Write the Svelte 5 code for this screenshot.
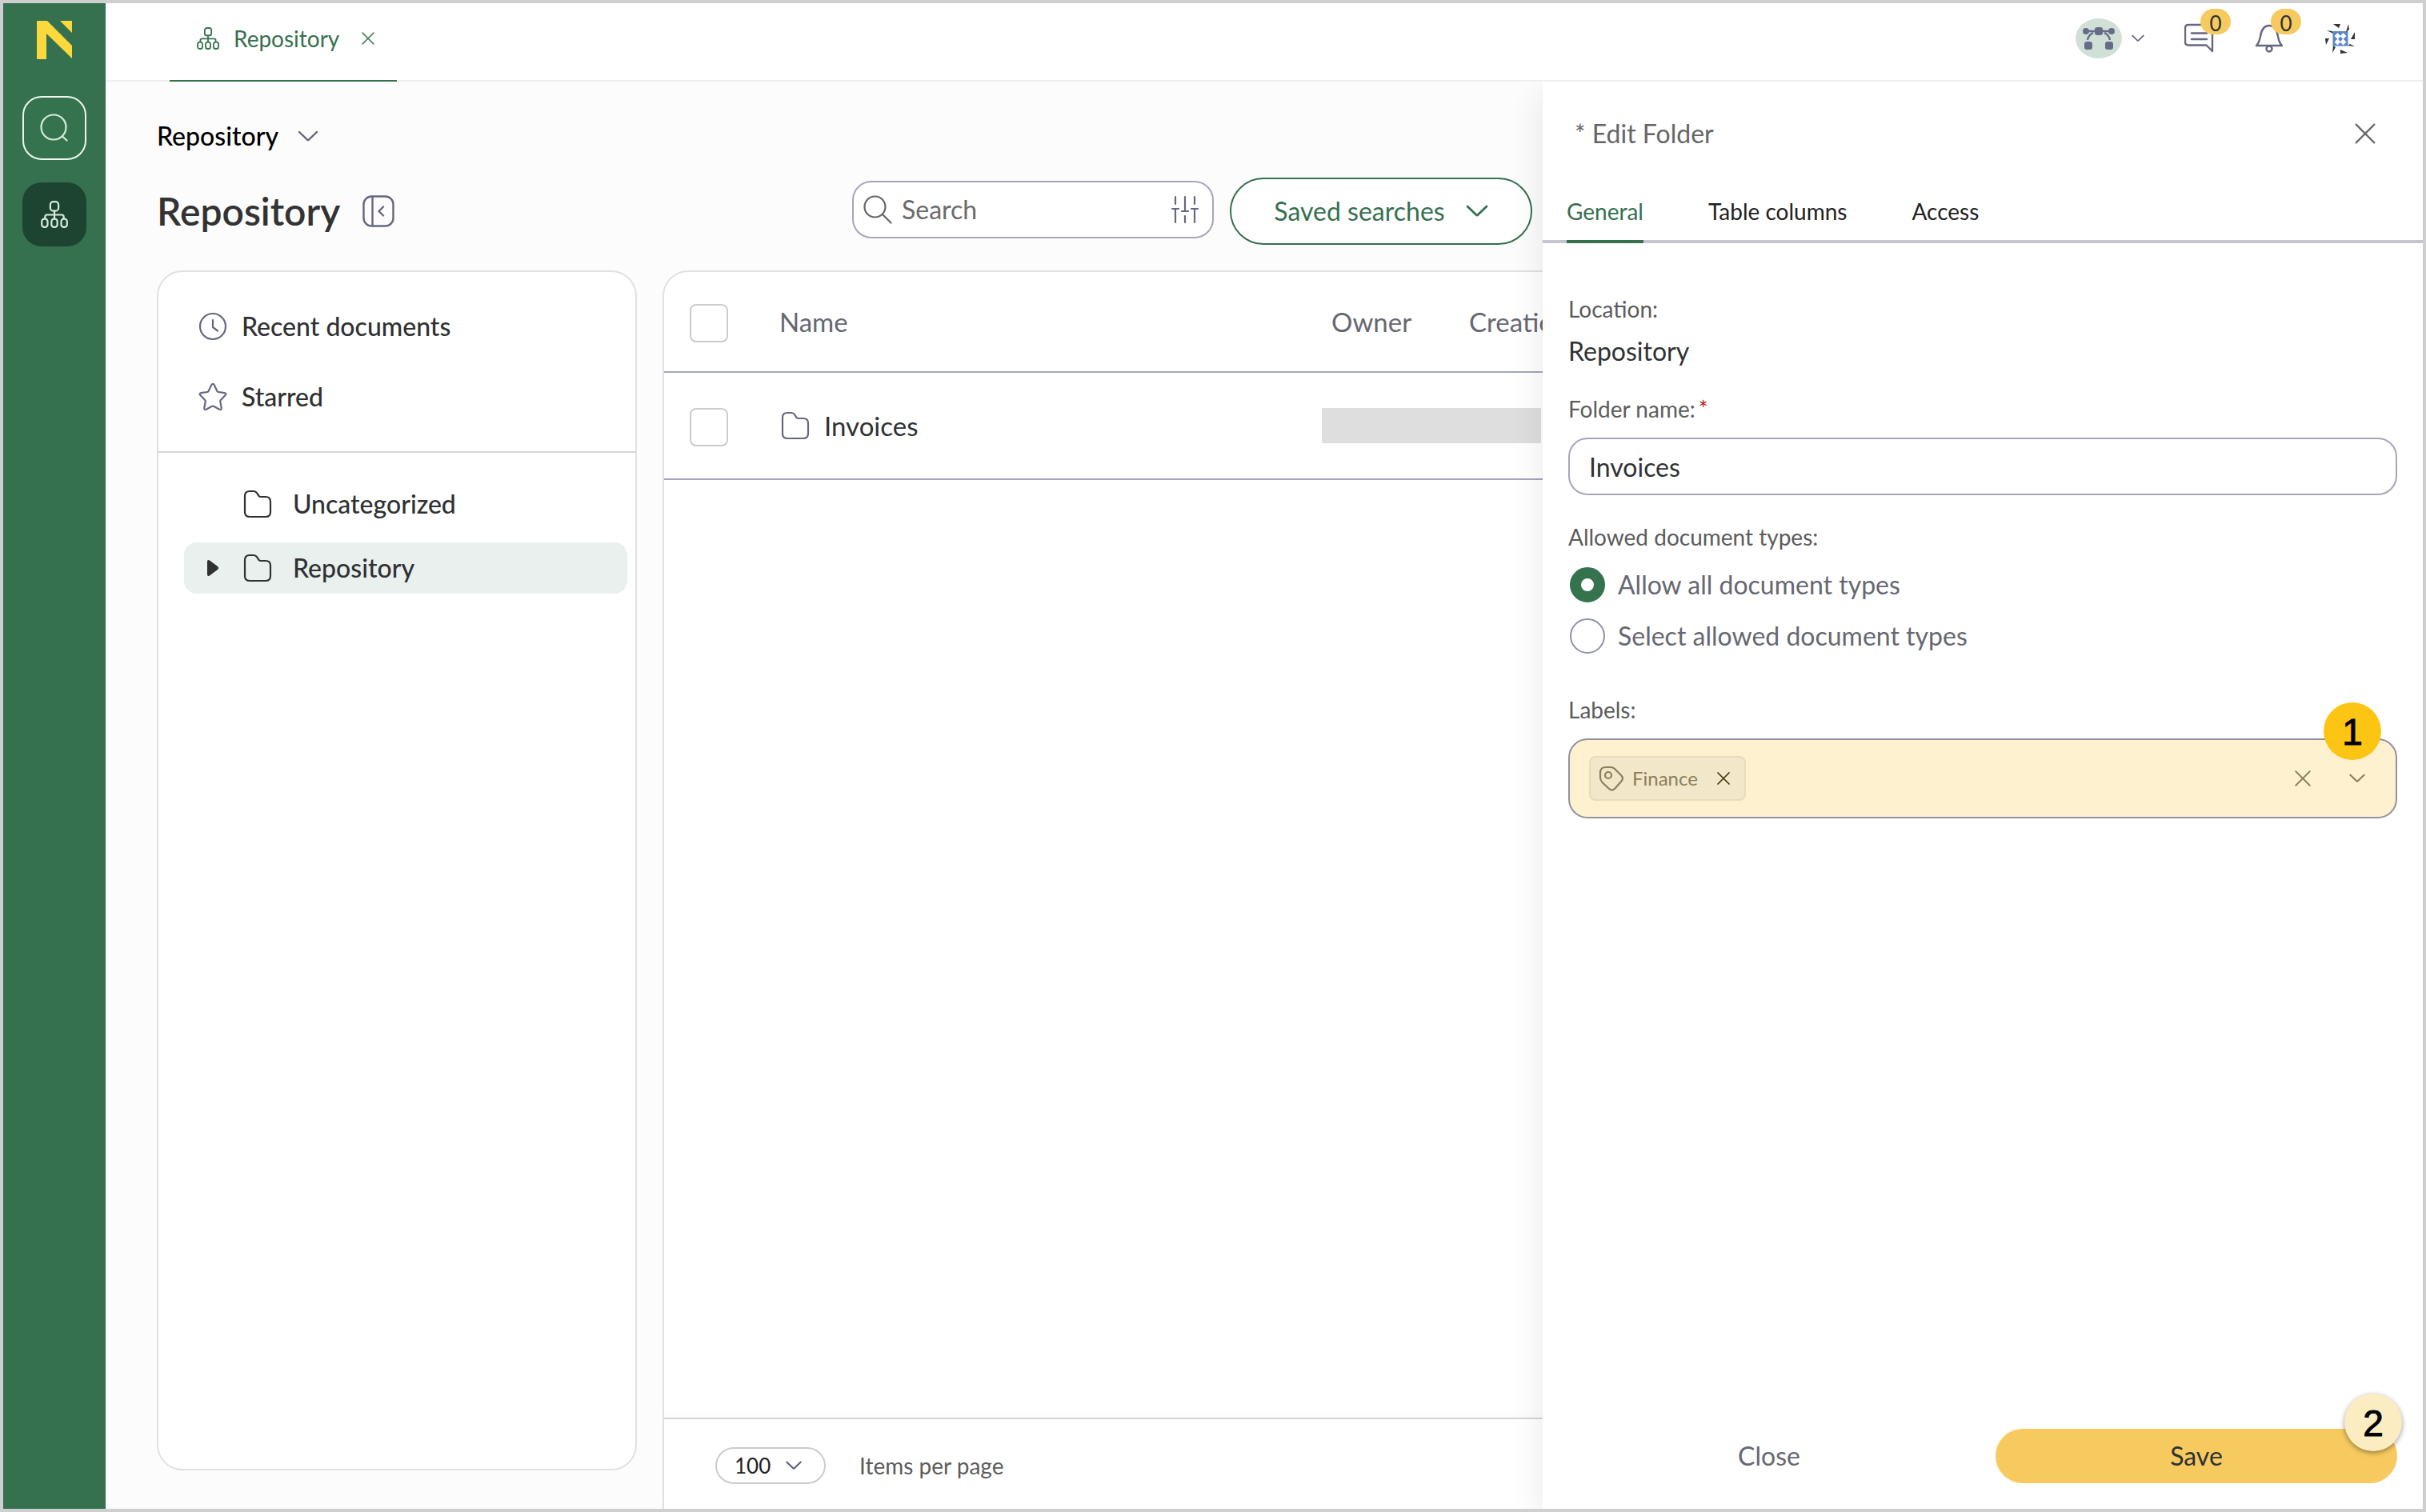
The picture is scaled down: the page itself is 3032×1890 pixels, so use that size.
<script>
  let search = $state("");
  let folderName = $state("Invoices");
  let docTypes = $state("all");
  let perPage = $state("100");
  let activeTab = $state("General");
  let labels = $state(["Finance"]);

  const tabs = ["General", "Table columns", "Access"];
  const folders = [
    { name: "Uncategorized", selected: false },
    { name: "Repository", selected: true },
  ];
</script>

{#snippet orgIcon(size)}
  <svg class="icon" width={size} height={size} viewBox="0 0 28 28" stroke-width="1.8">
    <rect x="9.8" y="1" width="8.4" height="9.4" rx="3" />
    <path d="M14 10.4V18M4.4 18v-1.6q0-2 2-2h15.2q2 0 2 2V18" />
    <rect x="1" y="18.6" width="6" height="8.4" rx="2.6" />
    <rect x="11" y="18.6" width="6" height="8.4" rx="2.6" />
    <rect x="21" y="18.6" width="6" height="8.4" rx="2.6" />
  </svg>
{/snippet}

{#snippet folderIcon()}
  <svg class="icon" width="36" height="36" viewBox="0 0 36 36" stroke-width="2.2">
    <path d="M2 8q0-6 6-6h5q2.600 0 4 2.200l2.300 3.400q1 1.400 2.700 1.400h6q6 0 6 6v13q0 6-6 6H8q-6 0-6-6z" />
  </svg>
{/snippet}

{#snippet chevron(width, stroke)}
  <svg class="icon" {width} height={width / 2 + 2} viewBox="0 0 28 16" stroke-width={stroke}>
    <path d="M2 2l11 10.500q1 1 2 0L26 2" />
  </svg>
{/snippet}

{#snippet cross(size, stroke)}
  <svg class="icon" width={size} height={size} viewBox="0 0 24 24" stroke-width={stroke}>
    <path d="M1.500 1.500l21 21M22.500 1.500l-21 21" />
  </svg>
{/snippet}

<div class="app">
  <nav class="rail" aria-label="Main">
    <svg class="logo" width="44" height="48" viewBox="0 0 44 48">
      <path d="M0 0h13l31 31v16L12 16v32H0zM29 0h15v15z" />
    </svg>
    <button class="rail-btn outlined" aria-label="Search">
      <svg class="icon" width="36" height="36" viewBox="0 0 36 36" stroke-width="2.200">
        <circle cx="17" cy="17" r="15.500" />
        <path d="M28 28.500l5.500 5" />
      </svg>
    </button>
    <button class="rail-btn current" aria-label="Repository">
      {@render orgIcon(34)}
    </button>
  </nav>

  <div class="workspace">
    <header class="topbar">
      <div class="doc-tab">
        {@render orgIcon(28)}
        <a href="#repository">Repository</a>
        <button aria-label="Close tab">{@render cross(16, 2.2)}</button>
      </div>

      <div class="tools">
        <button class="team" aria-label="Workspace">
          <svg width="58" height="50" viewBox="0 0 58 50">
            <ellipse cx="29" cy="25" rx="29" ry="25" fill="#d0e0d7" />
            <path d="M13 16h32M22 18q-6 3-7 9M36 18q6 3 7 9" fill="none" stroke="#666c88" stroke-width="2.500" />
            <g fill="#666c88">
              <circle cx="13" cy="16" r="4" />
              <circle cx="45" cy="16" r="4" />
              <rect x="24" y="11" width="10" height="10" rx="3" />
              <rect x="11" y="29" width="10" height="10" rx="3" />
              <rect x="37" y="29" width="10" height="10" rx="3" />
            </g>
          </svg>
          {@render chevron(16, 3)}
        </button>
        <button class="notice" aria-label="Messages">
          <svg class="icon" width="38" height="38" viewBox="0 0 38 38" stroke-width="2.400">
            <path d="M5 2h30v33l-7.500-7.500H5q-4 0-4-4V6q0-4 4-4zM9 12.500h19M9 20h19" />
          </svg>
          <span class="count">0</span>
        </button>
        <button class="notice" aria-label="Notifications">
          <svg class="icon" width="38" height="38" viewBox="0 0 38 38" stroke-width="2.400">
            <path d="M2 28h32q-3.500-3.500-5-11.500Q27 3 18 3T7 16.500Q5.500 24.500 2 28z" />
            <circle cx="18" cy="32" r="3.500" />
          </svg>
          <span class="count">0</span>
        </button>
        <button class="profile" aria-label="Profile">
          <svg width="38" height="38" viewBox="0 0 38 38">
            <path fill="#5b86c6" d="M9.500 10h19v18.500h-19z" />
            <path fill="#fff" d="M15.500 12l3.500 3.800 3.500-3.800 4 4-3.800 3.800 3.800 3.800-4 4-3.500-3.800-3.500 3.800-4-4 3.800-3.800-3.800-3.800z" />
            <path fill="#5b86c6" d="M19 16.500l3 3.200-3 3.300-3-3.300z" />
            <path fill="#333" d="M10 1h9l-2 5zM29 1l-3 10 4-3zM37 11v9h-5zM28 28l9 1-6-3zM28 37l-9 1v-5zM10 28l-1 9 4-7zM0 19h5l-4 8zM2 9l8 4-1-3z" />
          </svg>
        </button>
      </div>
    </header>

    <div class="body">
      <main>
        <button class="crumb">Repository {@render chevron(26, 2.4)}</button>

        <div class="title-row">
          <h1>Repository</h1>
          <button class="collapse" aria-label="Collapse tree">
            <svg class="icon" width="40" height="40" viewBox="0 0 40 40" stroke-width="2.400">
              <rect x="1.500" y="1.500" width="37" height="37" rx="10" />
              <path d="M12.500 2v36M26 14.500L20.500 20l5.500 5.500" />
            </svg>
          </button>
          <div class="search">
            <svg class="icon" width="36" height="36" viewBox="0 0 36 36" stroke-width="2.200">
              <circle cx="14.500" cy="14.500" r="13" />
              <path d="M24 24l10.500 10.500" />
            </svg>
            <input type="search" placeholder="Search" aria-label="Search" bind:value={search} />
            <button aria-label="Search filters">
              <svg class="icon" width="36" height="36" viewBox="0 0 36 36" stroke-width="2.200">
                <path d="M6 2v9M6 17v17M2 17h8M18 2v18M14 20h8M18 26v8M30 2v9M30 17v17M26 17h8" />
              </svg>
            </button>
          </div>
          <button class="saved">Saved searches {@render chevron(28, 2.8)}</button>
        </div>

        <div class="columns">
          <section class="tree">
            <ul class="shortcuts">
              <li>
                <a href="#recent">
                  <svg class="icon" width="36" height="36" viewBox="0 0 36 36" stroke-width="2.200">
                    <circle cx="18" cy="18" r="16" />
                    <path d="M18 10v9l6 4.500" />
                  </svg>
                  Recent documents
                </a>
              </li>
              <li>
                <a href="#starred">
                  <svg class="icon" width="36" height="36" viewBox="0 0 36 36" stroke-width="2.200">
                    <path d="M16.300 3q1.700-2.500 3.400 0l3.600 7.800q.5 1 1.700 1.200l7.500 1.200q3 .6 1.100 2.900l-5.700 6q-.8.900-.6 2l1.400 7.700q.3 3-2.400 1.900l-6.900-3.700q-1.400-.7-2.800 0l-6.900 3.700q-2.700 1.100-2.400-1.900L8.700 24q.2-1.200-.6-2l-5.700-5.900q-1.900-2.300 1.100-2.900L11 12q1.200-.2 1.700-1.200z" />
                  </svg>
                  Starred
                </a>
              </li>
            </ul>
            <ul class="folders">
              {#each folders as folder}
                <li>
                  <a href="#folder" class:selected={folder.selected}>
                    <span class="caret">
                      {#if folder.selected}
                        <svg width="20" height="24" viewBox="0 0 20 24">
                          <path fill="#2f3133" d="M3 4q0-3 3-1.500l10 7.500q2 2 0 4L6 21.500Q3 23 3 20z" />
                        </svg>
                      {/if}
                    </span>
                    {@render folderIcon()}
                    {folder.name}
                  </a>
                </li>
              {/each}
            </ul>
          </section>

          <section class="documents">
            <div class="table-wrap">
              <table>
                <colgroup>
                  <col class="col-check" />
                  <col />
                  <col class="col-owner" />
                  <col class="col-date" />
                </colgroup>
                <thead>
                  <tr>
                    <th class="check"><input type="checkbox" aria-label="Select all" /></th>
                    <th>Name</th>
                    <th class="extra">Owner</th>
                    <th class="extra">Creation</th>
                  </tr>
                </thead>
                <tbody>
                  <tr>
                    <td class="check"><input type="checkbox" aria-label="Select Invoices" /></td>
                    <td><a class="doc" href="#invoices">{@render folderIcon()} Invoices</a></td>
                    <td colspan="2"><div class="redacted"></div></td>
                  </tr>
                </tbody>
              </table>
            </div>
            <footer class="pager">
              <div class="page-size">
                <select id="per-page" bind:value={perPage}>
                  <option>100</option>
                </select>
                {@render chevron(20, 3)}
              </div>
              <label for="per-page">Items per page</label>
            </footer>
          </section>
        </div>
      </main>

      <aside class="drawer">
        <div class="drawer-head">
          <h2>* Edit Folder</h2>
          <button aria-label="Close panel">{@render cross(26, 2)}</button>
        </div>
        <div class="tabs" role="tablist">
          {#each tabs as tab}
            <button
              role="tab"
              aria-selected={activeTab === tab}
              class:active={activeTab === tab}
              onclick={() => (activeTab = tab)}>{tab}</button>
          {/each}
        </div>

        <form id="folder-form" onsubmit={(e) => e.preventDefault()}>
          <div class="label">Location:</div>
          <p class="location">Repository</p>

          <label class="label" for="folder-name">Folder name:<span class="required">*</span></label>
          <input id="folder-name" class="text-field" type="text" bind:value={folderName} />

          <fieldset>
            <legend class="label">Allowed document types:</legend>
            <label class="radio">
              <input type="radio" name="types" value="all" bind:group={docTypes} />
              Allow all document types
            </label>
            <label class="radio">
              <input type="radio" name="types" value="some" bind:group={docTypes} />
              Select allowed document types
            </label>
          </fieldset>

          <label class="label" for="labels">Labels:</label>
          <div class="tag-field">
            {#each labels as label}
              <span class="tag">
                <svg class="icon" width="32" height="32" viewBox="0 0 32 32" stroke-width="2.200">
                  <path d="M2 9q0-7 7-7h6q3 0 5 2l8 8q4 4 0 8l-7.500 8.500q-4 4-8 0L4.500 21Q2 18 2 15z" />
                  <circle cx="12" cy="12" r="4" />
                </svg>
                {label}
                <button type="button" aria-label="Remove {label}" onclick={() => (labels = [])}>
                  {@render cross(16, 2.6)}
                </button>
              </span>
            {/each}
            <input id="labels" type="text" />
            <button type="button" aria-label="Clear labels" onclick={() => (labels = [])}>
              {@render cross(20, 2.2)}
            </button>
            <button type="button" aria-label="Show labels">{@render chevron(20, 3)}</button>
            <span class="step">1</span>
          </div>
        </form>

        <div class="actions">
          <button class="close">Close</button>
          <button class="save" form="folder-form">Save <span class="step pale">2</span></button>
        </div>
      </aside>
    </div>
  </div>
</div>

<style>
  :global(body) {
    font-family: Lato, sans-serif;
    font-size: 32px;
    line-height: 40px;
    color: #2f3133;
  }

  * {
    box-sizing: border-box;
  }

  h1,
  h2,
  p,
  ul,
  fieldset {
    margin: 0;
    padding: 0;
    border: 0;
    list-style: none;
  }

  button,
  input,
  select {
    margin: 0;
    padding: 0;
    border: 0;
    outline: 0;
    background: none;
    color: inherit;
    font: inherit;
    appearance: none;
  }

  button {
    display: flex;
    align-items: center;
    justify-content: center;
    cursor: pointer;
  }

  a {
    color: inherit;
    text-decoration: none;
  }

  svg {
    display: block;
    flex-shrink: 0;
  }

  .icon {
    fill: none;
    stroke: currentColor;
    stroke-linecap: round;
    stroke-linejoin: round;
  }

  .app {
    display: flex;
    height: 100vh;
    border: 4px solid #cfcfcf;
    background: #fff;
  }

  /* left rail */
  .rail {
    display: flex;
    flex: 0 0 128px;
    flex-direction: column;
    align-items: center;
    gap: 28px;
    padding-top: 22px;
    background: #35704f;
  }

  .logo {
    margin-bottom: 18px;
    fill: #fbd83c;
  }

  .rail-btn {
    width: 80px;
    height: 80px;
    border-radius: 24px;
    color: #d5ecdc;
  }

  .rail-btn.outlined {
    border: 2px solid #eef8ea;
    background: #35734f;
  }

  .rail-btn.current {
    background: #1d4430;
  }

  .workspace {
    display: flex;
    flex: 1;
    flex-direction: column;
    min-width: 0;
  }

  /* top bar */
  .topbar {
    display: flex;
    justify-content: space-between;
    height: 98px;
    padding: 0 84px 0 80px;
    border-bottom: 2px solid #efefef;
  }

  .doc-tab {
    display: flex;
    align-items: center;
    height: 98px;
    padding: 0 28px 8px 34px;
    border-bottom: 2px solid #35704f;
    font-size: 28px;
    line-height: 36px;
    color: #35704f;
  }

  .doc-tab a {
    margin: 0 28px 0 18px;
  }

  .tools {
    display: flex;
    align-items: center;
    padding-bottom: 8px;
    color: #666780;
  }

  .team {
    gap: 12px;
  }

  .notice {
    position: relative;
    margin-left: 50px;
  }

  .count {
    position: absolute;
    top: -18px;
    left: 20px;
    width: 38px;
    height: 32px;
    border-radius: 16px;
    background: #f6ca5f;
    font-size: 26px;
    line-height: 36px;
    text-align: center;
    color: #2f3133;
  }

  .profile {
    margin-left: 50px;
  }

  .body {
    display: flex;
    flex: 1;
    min-height: 0;
  }

  /* page */
  main {
    display: flex;
    flex: 1;
    flex-direction: column;
    min-width: 0;
    padding: 48px 0 0 64px;
    overflow: hidden;
    background: #fcfcfc;
  }

  .crumb {
    align-self: flex-start;
    gap: 24px;
    font-weight: 500;
    color: #000;
  }

  .crumb svg,
  .collapse {
    color: #666780;
  }

  .title-row {
    display: flex;
    align-items: center;
    height: 84px;
    margin: 32px 13px 32px 0;
  }

  h1 {
    font-size: 48px;
    line-height: 56px;
    font-weight: 600;
    color: #333;
  }

  .collapse {
    margin: 0 auto 0 28px;
  }

  .search {
    display: flex;
    align-items: center;
    width: 452px;
    height: 72px;
    margin: 0 20px 4px 0;
    padding: 0 16px 0 12px;
    border: 2px solid #a5a6bb;
    border-radius: 24px;
    background: #fff;
    color: #666;
  }

  .search input {
    flex: 1;
    min-width: 0;
    padding-left: 12px;
  }

  .search input::placeholder {
    color: #6b6b6b;
  }

  .search button {
    color: #666780;
  }

  .saved {
    gap: 26px;
    width: 378px;
    height: 84px;
    border: 2px solid #35704f;
    border-radius: 42px;
    background: #fff;
    color: #35704f;
  }

  .columns {
    display: flex;
    flex: 1;
    gap: 32px;
    min-height: 0;
  }

  .tree {
    flex: 0 0 600px;
    margin-bottom: 48px;
    border: 2px solid #e1e1e1;
    border-radius: 32px;
    background: #fff;
    font-weight: 500;
  }

  .shortcuts {
    display: flex;
    flex-direction: column;
    gap: 48px;
    padding: 48px 50px;
    border-bottom: 2px solid #d6d6d6;
  }

  .shortcuts a {
    display: flex;
    align-items: center;
    gap: 18px;
  }

  .shortcuts svg {
    color: #666780;
  }

  .folders {
    display: flex;
    flex-direction: column;
    gap: 16px;
    padding: 32px 10px 32px 32px;
  }

  .folders a {
    display: flex;
    align-items: center;
    gap: 26px;
    height: 64px;
    padding-left: 26px;
    border-radius: 16px;
  }

  .folders a.selected {
    background: #e9f0ed;
  }

  .caret {
    flex: 0 0 22px;
  }

  .documents {
    display: flex;
    flex: 1;
    flex-direction: column;
    min-width: 0;
    border: 2px solid #e1e1e1;
    border-width: 2px 0 0 2px;
    border-radius: 32px 0 0 0;
    background: #fff;
  }

  .table-wrap {
    flex: 1;
    overflow: hidden;
  }

  table {
    width: 100%;
    border-collapse: separate;
    border-spacing: 0;
    table-layout: fixed;
    font-size: 33px;
  }

  .col-check {
    width: 142px;
  }

  .col-owner {
    width: 172px;
  }

  .col-date {
    width: 104px;
  }

  th,
  td {
    padding: 0;
    border-bottom: 2px solid #a5a6bb;
    text-align: left;
    white-space: nowrap;
  }

  th {
    height: 126px;
    padding-left: 2px;
    font-weight: 400;
    color: #666871;
  }

  th.extra {
    padding-left: 12px;
  }

  td {
    height: 134px;
  }

  th.check,
  td.check {
    padding-left: 32px;
  }

  .check input {
    display: block;
    width: 48px;
    height: 48px;
    margin-top: 4px;
    border: 2px solid #ccc;
    border-radius: 8px;
    background: #fff;
  }

  .check input:checked {
    background: #35704f;
  }

  .doc {
    display: flex;
    align-items: center;
    gap: 18px;
    padding-left: 4px;
  }

  .doc :global(svg) {
    color: #666780;
  }

  .redacted {
    width: 274px;
    height: 44px;
    background: #dedede;
  }

  .pager {
    display: flex;
    align-items: center;
    gap: 42px;
    height: 114px;
    padding: 4px 64px 0;
    border-top: 2px solid #d6d6d6;
    box-shadow: 0 -4px 8px #00000005;
    font-size: 28px;
    line-height: 36px;
    color: #5c5c5c;
  }

  .page-size {
    display: grid;
    grid-template-columns: 88px 50px;
    align-items: center;
    color: #5c6072;
  }

  .page-size select {
    grid-area: 1 / 1 / 2 / 3;
    height: 46px;
    padding-left: 22px;
    border: 2px solid #ccc;
    border-radius: 23px;
    font-size: 26px;
    line-height: 32px;
    color: #222;
  }

  .page-size :global(svg) {
    grid-area: 1 / 2;
    pointer-events: none;
  }

  /* edit drawer */
  .drawer {
    position: relative;
    display: flex;
    flex: 0 0 1100px;
    flex-direction: column;
    background: #fff;
    box-shadow: 0 12px 40px #00000018;
    clip-path: inset(0 0 0 -60px);
  }

  .drawer-head {
    display: flex;
    align-items: center;
    justify-content: space-between;
    padding: 45px 59px 59px 40px;
    color: #666;
  }

  h2 {
    font-size: 32px;
    font-weight: 400;
  }

  .tabs {
    display: flex;
    gap: 81px;
    height: 58px;
    padding: 0 30px;
    box-shadow: inset 0 -4px #c5c5d2;
    font-size: 28px;
    line-height: 36px;
  }

  .tabs button {
    align-items: flex-start;
    border-bottom: 4px solid transparent;
    color: #222;
  }

  .tabs button.active {
    border-color: #35704f;
    color: #35704f;
  }

  form {
    flex: 1;
    padding: 64px 32px 0;
  }

  .label {
    display: block;
    padding: 0;
    font-size: 28px;
    line-height: 36px;
    color: #5c5c5c;
  }

  .location {
    margin: 15px 0 34px;
  }

  .required {
    margin-left: 4px;
    color: #b3261e;
  }

  .text-field {
    width: 100%;
    height: 72px;
    margin: 18px 0 34px;
    padding: 0 24px;
    border: 2px solid #a5a6bb;
    border-radius: 24px;
  }

  fieldset {
    margin-bottom: 52px;
  }

  .radio {
    display: flex;
    align-items: center;
    gap: 16px;
    height: 44px;
    margin-top: 20px;
    padding-left: 2px;
    color: #666871;
  }

  .radio input {
    width: 44px;
    height: 44px;
    border: 2px solid #8e90ae;
    border-radius: 50%;
  }

  .radio input:checked {
    border: 14px solid #35734f;
  }

  .tag-field {
    position: relative;
    display: flex;
    align-items: center;
    height: 100px;
    margin-top: 18px;
    padding: 0 38px 0 24px;
    border: 2px solid #9293a0;
    border-radius: 24px;
    background: #fef1d0;
    color: #8a7f5c;
  }

  .tag-field input {
    flex: 1;
    min-width: 0;
  }

  .tag-field > button + button {
    margin-left: 48px;
  }

  .tag {
    display: flex;
    align-items: center;
    height: 56px;
    padding: 0 18px 0 10px;
    border: 2px solid #e7dcbd;
    border-radius: 8px;
    background: #f2e7c8;
    font-size: 24px;
    line-height: 32px;
    gap: 10px;
  }

  .tag button {
    margin-left: 14px;
    color: #40380f;
  }

  .step {
    position: absolute;
    top: -47px;
    right: 18px;
    width: 72px;
    height: 72px;
    border-radius: 50%;
    background: #fdc513;
    font-family: "Liberation Sans", sans-serif;
    font-size: 46px;
    line-height: 74px;
    text-align: center;
    color: #000;
    -webkit-text-stroke: 1px #000;
  }

  .step.pale {
    top: -44px;
    right: -6px;
    background: #fbedc1;
    box-shadow: 0 2px 6px #00000066;
  }

  .actions {
    display: flex;
    gap: 32px;
    padding: 0 32px 32px;
  }

  .actions button {
    flex: 1;
    height: 68px;
    border-radius: 34px;
  }

  .close {
    color: #666871;
  }

  .actions .save {
    position: relative;
    background: #f7ca5f;
  }
</style>
